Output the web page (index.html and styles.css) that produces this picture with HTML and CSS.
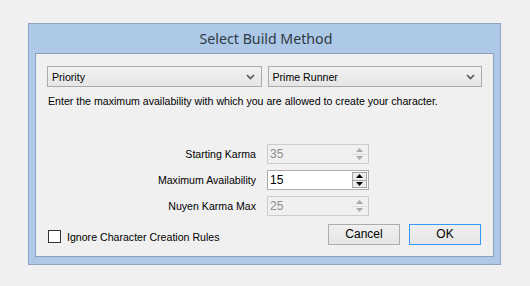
FILE: index.html
```html
<!DOCTYPE html>
<html lang="en">
<head>
    <meta charset="UTF-8">
    <title>Select Build Method</title>
    <link rel="stylesheet" href="styles.css">
</head>
<body>
    <div class="window">
        <div class="title">Select Build Method</div>
        <div class="client">
            <div class="combos">
                <div class="combo">
                    <span>Priority</span>
                    <svg class="chev" width="9" height="6" viewBox="0 0 9 6"><path d="M1 1 L4.5 4.5 L8 1" fill="none" stroke="#555" stroke-width="1.6"/></svg>
                </div>
                <div class="combo">
                    <span>Prime Runner</span>
                    <svg class="chev" width="9" height="6" viewBox="0 0 9 6"><path d="M1 1 L4.5 4.5 L8 1" fill="none" stroke="#555" stroke-width="1.6"/></svg>
                </div>
            </div>
            <p class="desc">Enter the maximum availability with which you are allowed to create your character.</p>

            <div class="fields">
                <label>Starting Karma</label>
                <div class="spin disabled">
                    <span class="val">35</span>
                    <div class="spin-btns">
                        <div class="up"><svg width="7" height="4" viewBox="0 0 7 4"><path d="M0 4 L3.5 0 L7 4Z"/></svg></div>
                        <div class="down"><svg width="7" height="4" viewBox="0 0 7 4"><path d="M0 0 L3.5 4 L7 0Z"/></svg></div>
                    </div>
                </div>

                <label>Maximum Availability</label>
                <div class="spin">
                    <span class="val">15</span>
                    <div class="spin-btns">
                        <div class="up"><svg width="7" height="4" viewBox="0 0 7 4"><path d="M0 4 L3.5 0 L7 4Z"/></svg></div>
                        <div class="down"><svg width="7" height="4" viewBox="0 0 7 4"><path d="M0 0 L3.5 4 L7 0Z"/></svg></div>
                    </div>
                </div>

                <label>Nuyen Karma Max</label>
                <div class="spin disabled">
                    <span class="val">25</span>
                    <div class="spin-btns">
                        <div class="up"><svg width="7" height="4" viewBox="0 0 7 4"><path d="M0 4 L3.5 0 L7 4Z"/></svg></div>
                        <div class="down"><svg width="7" height="4" viewBox="0 0 7 4"><path d="M0 0 L3.5 4 L7 0Z"/></svg></div>
                    </div>
                </div>
            </div>

            <div class="bottom">
                <div class="check">
                    <span class="box"></span>
                    <span>Ignore Character Creation Rules</span>
                </div>
                <div class="buttons">
                    <div class="btn">Cancel</div>
                    <div class="btn default">OK</div>
                </div>
            </div>
        </div>
    </div>
</body>
</html>
```

FILE: styles.css
```css
html,
body {
    margin: 0;
    padding: 0;
    height: 100%;
    background: #f0f0f0;
    font-family: "Liberation Sans", Arial, sans-serif;
    font-size: 10.6px;
    color: #000;
}

.window {
    margin: 23px 0 0 28px;
    width: 471px;
    height: 240px;
    border: 1px solid #8fa3bf;
    background: #adc9e7;
    display: flex;
    flex-direction: column;
}

.title {
    height: 29px;
    line-height: 29px;
    text-align: center;
    font-family: "Noto Sans", sans-serif;
    font-size: 14.2px;
    color: #2f3a44;
    padding-left: 3px;
}

.client {
    margin: 0 6px 7px 6px;
    flex: 1;
    border: 1px solid #8aa0bb;
    background: #f0f0f0;
    padding: 12px 11px 0 11px;
    display: flex;
    flex-direction: column;
}

.combos {
    display: flex;
    gap: 6px;
}

.combo {
    flex: 1;
    height: 19px;
    border: 1px solid #acacac;
    background: linear-gradient(#f2f2f2, #e5e5e5);
    display: flex;
    align-items: center;
    justify-content: space-between;
    padding: 0 6px 0 4px;
}

.chev {
    display: block;
}

.desc {
    margin: 7px 0 0 1px;
    line-height: 14px;
}

.fields {
    margin-top: 36px;
    display: grid;
    grid-template-columns: 209px 102px;
    column-gap: 11px;
    row-gap: 6px;
    align-items: center;
}

.fields label {
    text-align: right;
}

.spin {
    height: 18px;
    border: 1px solid #adadad;
    background: #fff;
    display: flex;
    align-items: center;
    justify-content: space-between;
    padding-left: 2px;
}

.spin.disabled {
    border-color: #cccccc;
    background: #f0f0f0;
    color: #8d8d8d;
}

.val {
    font-size: 12px;
}

.spin-btns {
    width: 15px;
    height: 16px;
    margin-right: 1px;
    display: flex;
    flex-direction: column;
}

.spin-btns div {
    flex: 1;
    display: flex;
    align-items: center;
    justify-content: center;
}

.spin-btns svg {
    display: block;
    fill: #000;
}

.spin .spin-btns div {
    border: 1px solid #a4a4a4;
    background: #ececec;
}

.spin .spin-btns .up {
    border-bottom: none;
}

.spin.disabled .spin-btns div {
    border: none;
    background: none;
}

.spin.disabled .spin-btns .up {
    border-bottom: 1px solid #dcdcdc;
}

.spin.disabled .spin-btns svg {
    fill: #a8a8a8;
}

.bottom {
    margin-top: 8px;
    display: flex;
    justify-content: space-between;
    align-items: center;
    padding-right: 1px;
}

.check {
    display: flex;
    align-items: center;
    gap: 6px;
    margin-top: 4px;
    margin-left: 1px;
}

.box {
    width: 11px;
    height: 11px;
    border: 1px solid #333;
    background: #fff;
}

.buttons {
    display: flex;
    gap: 9px;
}

.btn {
    width: 70px;
    height: 19px;
    border: 1px solid #adadad;
    background: linear-gradient(#f0f0f0, #e5e5e5);
    text-align: center;
    line-height: 19px;
    font-size: 12px;
}

.btn.default {
    border-color: #3399ff;
}
```
